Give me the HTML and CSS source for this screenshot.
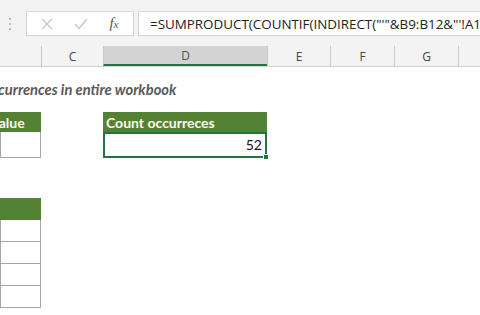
FILE: index.html
```html
<!DOCTYPE html>
<html lang="en">
<head>
    <meta charset="UTF-8">
    <title>Count occurrences in entire workbook</title>
    <link rel="stylesheet" href="styles.css">
</head>
<body>
    <div class="formula-bar">
        <div class="grip"><span></span><span></span><span></span></div>
        <div class="fx-box">
            <svg class="icon" width="12" height="12" viewBox="0 0 12 12">
                <path d="M1 1 L11 11 M11 1 L1 11" stroke="#c4c4c4" stroke-width="1.3" fill="none"/>
            </svg>
            <svg class="icon" width="14" height="12" viewBox="0 0 14 12">
                <path d="M1 6 L5 10.5 L13 1" stroke="#c4c4c4" stroke-width="1.3" fill="none"/>
            </svg>
            <span class="fx">f<span class="fx-x">x</span></span>
        </div>
        <div class="formula-input">=SUMPRODUCT(COUNTIF(INDIRECT("'"&amp;B9:B12&amp;"'!A1:Z100"),D5))</div>
    </div>

    <div class="col-headers">
        <div class="col-head"></div>
        <div class="col-head">C</div>
        <div class="col-head active">D</div>
        <div class="col-head">E</div>
        <div class="col-head">F</div>
        <div class="col-head">G</div>
        <div class="col-head last"></div>
    </div>

    <div class="sheet">
        <div class="title">Count occurrences in entire workbook</div>

        <div class="row header-row">
            <div class="cell green">Value</div>
            <div class="cell"></div>
            <div class="cell green">Count occurreces</div>
        </div>
        <div class="row data-row">
            <div class="cell boxed"></div>
            <div class="cell"></div>
            <div class="cell selected">52<span class="handle"></span></div>
        </div>

        <div class="lower">
            <div class="cell green tall">Sheets</div>
            <div class="cell boxed tall"></div>
            <div class="cell boxed tall"></div>
            <div class="cell boxed tall"></div>
            <div class="cell boxed tall"></div>
        </div>
    </div>
</body>
</html>
```

FILE: styles.css
```css
body {
    margin: 0;
    width: 480px;
    height: 315px;
    overflow: hidden;
    background: #ffffff;
    font-family: Lato, "Open Sans", sans-serif;
}

/* Formula bar */
.formula-bar {
    display: flex;
    align-items: center;
    height: 46px;
    background: #f3f3f3;
    box-sizing: border-box;
    padding-top: 1px;
}

.grip {
    display: flex;
    flex-direction: column;
    gap: 3px;
    width: 20px;
    margin-right: 6px;
    align-items: center;
}

.grip span {
    width: 2px;
    height: 2px;
    background: #b8b8b8;
}

.fx-box {
    display: flex;
    align-items: center;
    justify-content: space-around;
    width: 108px;
    height: 25px;
    box-sizing: border-box;
    background: #ffffff;
    border: 1px solid #d6d6d6;
    padding: 0 4px 0 4px;
}

.fx {
    font-family: "Liberation Serif", serif;
    font-style: italic;
    font-size: 15px;
    color: #555555;
}

.fx-x {
    font-size: 11px;
}

.formula-input {
    flex: 1;
    margin-left: 4px;
    height: 25px;
    box-sizing: border-box;
    background: #ffffff;
    border: 1px solid #d6d6d6;
    border-right: none;
    padding: 3px 0 0 11px;
    font-family: "Open Sans", sans-serif;
    font-size: 13.4px;
    color: #222222;
    white-space: nowrap;
    overflow: hidden;
}

/* Column headers */
.col-headers {
    display: grid;
    grid-template-columns: 41px 62px 164px 63px 64px 64px 1fr;
    height: 21px;
    background: #e6e6e6;
    border-bottom: 1px solid #d0d0d0;
    box-sizing: border-box;
}

.col-head {
    display: flex;
    align-items: center;
    justify-content: center;
    font-family: "Open Sans", sans-serif;
    font-size: 12px;
    color: #444444;
    border-left: 1px solid #c8c8c8;
    background: #f3f3f3;
}

.col-head:first-child {
    border-left: none;
}

.col-head.active {
    background: #d3d3d3;
    border-bottom: 2px solid #217346;
    color: #555555;
}

/* Sheet */
.sheet {
    display: flex;
    flex-direction: column;
}

.title {
    margin: 13px 0 0 -57px;
    height: 32px;
    font-weight: bold;
    font-style: italic;
    font-size: 14.7px;
    color: #595959;
    white-space: nowrap;
}

.row {
    display: grid;
    grid-template-columns: 41px 62px 164px;
}

.header-row {
    height: 20px;
}

.data-row {
    height: 23px;
}

.cell {
    box-sizing: border-box;
    font-size: 14px;
    white-space: nowrap;
    overflow: hidden;
}

.green {
    background: #548235;
    color: #fbfbee;
    font-weight: bold;
    padding-left: 3px;
    line-height: 21px;
}

.row .green:first-child {
    text-indent: -10px;
    padding-left: 0;
}

.boxed {
    border: 1px solid #a6a6a6;
    border-top: none;
}

.selected {
    position: relative;
    overflow: visible;
    border: 2px solid #217346;
    text-align: right;
    padding-right: 3px;
    line-height: 22px;
    color: #111111;
}

.handle {
    position: absolute;
    right: -4px;
    bottom: -4px;
    width: 6px;
    height: 6px;
    background: #217346;
    border: 1px solid #ffffff;
    box-sizing: border-box;
}

.lower {
    display: flex;
    flex-direction: column;
    width: 41px;
    margin-top: 43px;
}

.tall {
    height: 22px;
}

.lower .green {
    color: transparent;
}
```
